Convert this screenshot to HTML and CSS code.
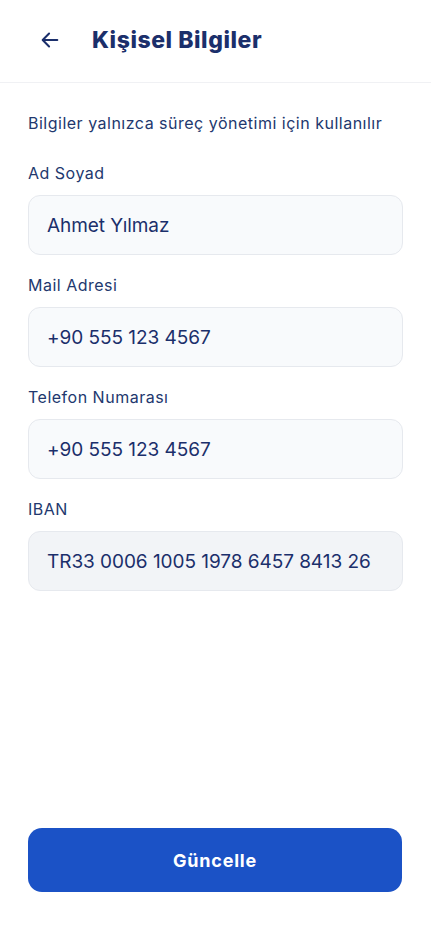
FILE: index.html
```html
<!DOCTYPE html>
<html lang="tr">
<head>
<meta charset="utf-8">
<meta name="viewport" content="width=device-width, initial-scale=1">
<link rel="stylesheet" href="styles.css">
<title>Kişisel Bilgiler</title>
</head>
<body>
<div class="screen">
  <header class="header">
    <button class="back" aria-label="Geri">
      <svg width="22" height="22" viewBox="0 0 24 24" fill="none" stroke="#1b2f6b" stroke-width="2.2" stroke-linecap="round" stroke-linejoin="round"><path d="M20 12H4.5"/><path d="M11 5l-7 7 7 7"/></svg>
    </button>
    <h1 class="title">Kişisel Bilgiler</h1>
  </header>
  <main class="content">
    <p class="note">Bilgiler yalnızca süreç yönetimi için kullanılır</p>
    <div class="fields">
      <div class="field">
        <label class="label">Ad Soyad</label>
        <div class="input">Ahmet Yılmaz</div>
      </div>
      <div class="field">
        <label class="label">Mail Adresi</label>
        <div class="input">+90 555 123 4567</div>
      </div>
      <div class="field">
        <label class="label">Telefon Numarası</label>
        <div class="input">+90 555 123 4567</div>
      </div>
      <div class="field">
        <label class="label">IBAN</label>
        <div class="input input-disabled">TR33 0006 1005 1978 6457 8413 26</div>
      </div>
    </div>
  </main>
  <footer class="footer">
    <button class="primary">Güncelle</button>
  </footer>
</div>
</body>
</html>
```
FILE: styles.css
```css
* { box-sizing: border-box; }
html, body { margin: 0; padding: 0; background: #ffffff; }
body { font-family: Inter, "Noto Sans", sans-serif; color: #1b2f6b; }
.screen { width: 431px; height: 932px; display: flex; flex-direction: column; }
.header {
  height: 83px;
  border-bottom: 1px solid #f0f1f4;
  display: flex;
  align-items: center;
  padding: 0 0 2px 39px;
  gap: 31px;
}
.back { background: none; border: 0; padding: 0; width: 22px; height: 22px; display: flex; cursor: pointer; }
.title { margin: 0; font-size: 23px; font-weight: 800; letter-spacing: 0.55px; color: #1b2f6b; }
.content { padding: 30px 28px 0 28px; flex: 1; }
.note { margin: 0; font-size: 16px; line-height: 20px; color: #22386e; letter-spacing: 0.5px; }
.fields { margin-top: 30px; display: flex; flex-direction: column; gap: 20px; }
.field { display: flex; flex-direction: column; gap: 12px; }
.label { font-size: 16px; line-height: 20px; color: #22386e; letter-spacing: 0.5px; }
.input {
  height: 60px;
  border: 1px solid #e6e9ee;
  border-radius: 12px;
  background: #f8fafc;
  padding: 0 18px;
  display: flex;
  align-items: center;
  font-size: 19px;
  letter-spacing: -0.05px;
  color: #1b2f6b;
}
.input-disabled { background: #f2f4f7; }
.footer { padding: 0 29px 40px 28px; }
.primary {
  width: 100%;
  height: 64px;
  border: 0;
  border-radius: 14px;
  background: #1b52c6;
  color: #ffffff;
  font-family: Inter, "Noto Sans", sans-serif;
  font-size: 18px;
  font-weight: 700;
  letter-spacing: 0.8px;
}
```
